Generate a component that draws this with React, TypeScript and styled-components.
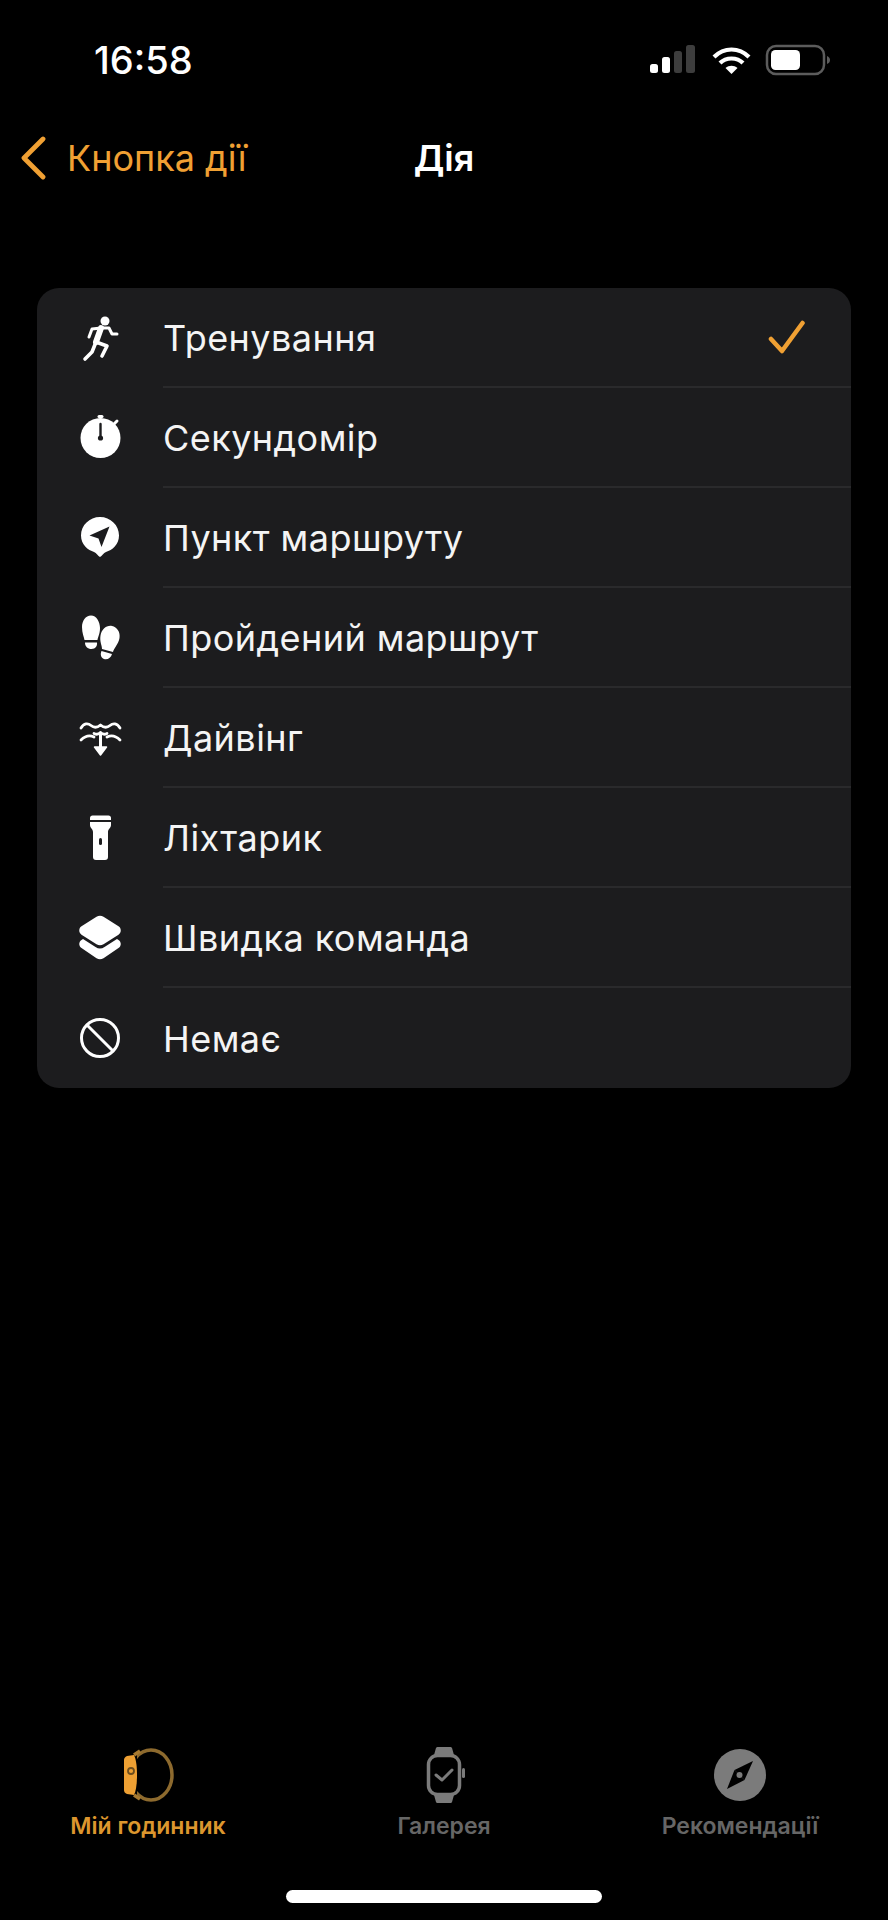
import React from "react";
import styled, { createGlobalStyle } from "styled-components";

const Global = createGlobalStyle`
  html, body { margin: 0; padding: 0; background: #000; }
  body { font-family: Inter, "Liberation Sans", sans-serif; -webkit-font-smoothing: antialiased; }
`;

const Screen = styled.div`
  width: 888px;
  height: 1920px;
  display: flex;
  flex-direction: column;
  background: #000;
  color: #fff;
  overflow: hidden;
`;

const StatusBar = styled.div`
  height: 120px;
  flex: none;
  display: flex;
  align-items: center;
  justify-content: space-between;
  padding: 0 58px 0 94px;
  box-sizing: border-box;
`;

const Time = styled.span`
  font-size: 38px;
  font-weight: 500;
`;

const StatusIcons = styled.div`
  display: flex;
  align-items: center;
`;

const NavBar = styled.div`
  height: 76px;
  flex: none;
  display: grid;
  grid-template-columns: 1fr auto 1fr;
  align-items: center;
  padding: 0 20px;
`;

const BackLink = styled.div`
  display: flex;
  align-items: center;
  gap: 21px;
  color: #f0a033;
  font-size: 36px;
`;

const NavTitle = styled.div`
  font-size: 36px;
  font-weight: 600;
`;

const Card = styled.ul`
  list-style: none;
  margin: 92px 37px 0;
  padding: 0;
  background: #1c1c1e;
  border-radius: 22px;
  flex: none;
`;

const Row = styled.li`
  height: 100px;
  display: flex;
  align-items: stretch;
`;

const IconCell = styled.div`
  width: 126px;
  flex: none;
  display: flex;
  align-items: center;
  justify-content: center;
`;

const RowBody = styled.div<{ $last?: boolean }>`
  flex: 1;
  display: flex;
  align-items: center;
  justify-content: space-between;
  padding: 2px 45px 0 0;
  font-size: 36px;
  letter-spacing: 0.45px;
  color: #f4f4f4;
  box-sizing: border-box;
  border-bottom: ${(p) => (p.$last ? "none" : "2px solid #2a2a2c")};
`;

const TabBar = styled.nav`
  margin-top: auto;
  display: grid;
  grid-template-columns: repeat(3, 1fr);
`;

const Tab = styled.div<{ $active?: boolean }>`
  display: flex;
  flex-direction: column;
  align-items: center;
  gap: 8px;
  color: ${(p) => (p.$active ? "#dc962e" : "#666666")};
  font-size: 23px;
  font-weight: 600;
  line-height: 28px;
`;

const HomeArea = styled.div`
  flex: none;
  display: flex;
  justify-content: center;
  padding: 50px 0 17px;
`;

const HomeIndicator = styled.div`
  width: 316px;
  height: 13px;
  border-radius: 7px;
  background: #fff;
`;

const W = "#ffffff";
const D = "#1c1c1e";
const O = "#f0a033";

const Ico: React.FC<{ children: React.ReactNode }> = ({ children }) => (
  <svg width="48" height="48" viewBox="0 0 48 48" fill="none">{children}</svg>
);

const RunIcon = () => (
  <Ico>
    <circle cx="29" cy="7" r="4.5" fill={W} />
    <path d="M25 14 L20 28" stroke={W} strokeWidth="6" strokeLinecap="round" />
    <g stroke={W} strokeWidth="3" strokeLinecap="round" strokeLinejoin="round">
      <path d="M25 14 L33 14 L36 20 L41 20" />
      <path d="M25 14 L16 15 L13 23" />
      <path d="M20 28 L16 38 L9 45" strokeWidth="3.6" />
      <path d="M20 28 L31 32 L26 42" strokeWidth="3.6" />
    </g>
  </Ico>
);

const StopwatchIcon = () => (
  <Ico>
    <circle cx="24.5" cy="24" r="20" fill={W} />
    <rect x="21.5" y="1" width="6" height="3" rx="1.5" fill={W} />
    <rect x="23.5" y="2" width="2" height="4" fill={W} />
    <path d="M38 10 L41 7" stroke={W} strokeWidth="3" strokeLinecap="round" />
    <path d="M24.5 10 V24" stroke={D} strokeWidth="2.4" strokeLinecap="round" />
    <circle cx="24.5" cy="24" r="2.6" fill={D} />
  </Ico>
);

const PinIcon = () => (
  <Ico>
    <path d="M24 3 C13.5 3 5 11.2 5 21.5 C5 31 12 36 18 38 C20.5 39 22 42 24 43 C26 42 27.5 39 30 38 C36 36 43 31 43 21.5 C43 11.2 34.5 3 24 3 Z" fill={W} />
    <path d="M33.5 12.5 L13.5 21.5 L22.5 24.5 L25.5 33 Z" fill={D} />
  </Ico>
);

const StepsIcon = () => (
  <Ico>
    <path d="M15 1.5 C20.5 1.5 24 8 24 14 C24 20 21.5 24 21.5 26 H8.5 C8 23 6 19 6 13 C6 7 9.5 1.5 15 1.5 Z" fill={W} />
    <path d="M9 28.5 H21 C21.5 32 19.5 35 15.5 35 C11.5 35 9 32.5 9 28.5 Z" fill={W} />
    <path d="M36 12 C41 13 44.5 18 43.5 24 C42.5 30 38 34 37 38 L26 35 C26 31 23.5 28 24.5 21.5 C25.5 15.5 30.5 11 36 12 Z" fill={W} />
    <path d="M25.5 37 L36 40 C35 44 31.5 46 28 45 C25 44 24 40.5 25.5 37 Z" fill={W} />
  </Ico>
);

const DiveIcon = () => (
  <Ico>
    <g stroke={W} strokeWidth="2.8" strokeLinecap="round" strokeLinejoin="round">
      <path d="M5 14 C8 9 12 9 15 11.5 C18 14 21 14 24.5 11 C28 14 31 14 34 11.5 C37 9 41 9 44 14" />
      <path d="M5 26 C9 22 14 21 18 23" />
      <path d="M31 23 C35 21 40 22 44 26" />
      <path d="M18 19.5 C21 21 23 20 24.5 18.5 C26 20 28 21 31 19.5" />
      <path d="M24.5 19 V36" strokeWidth="3" />
    </g>
    <path d="M18.5 33 H30.5 L24.5 41 Z" fill={W} stroke={W} strokeWidth="1.5" strokeLinejoin="round" />
  </Ico>
);

const FlashlightIcon = () => (
  <Ico>
    <path d="M14 4 C14 2.5 15 1.5 16.5 1.5 H32.5 C34 1.5 35 2.5 35 4 V6 H14 Z" fill={W} />
    <path d="M14 8 H35 V11 C35 14 32 15 32 18 V43 C32 45 31 46 29 46 H20 C18 46 17 45 17 43 V18 C17 15 14 14 14 11 Z" fill={W} />
    <rect x="23" y="24" width="3" height="7" rx="1.5" fill={D} />
  </Ico>
);

const LayersIcon = () => (
  <Ico>
    <path d="M20.5 2.8 C22.8 1.4 25.2 1.4 27.5 2.8 L42.5 12.3 C45.5 14.2 45.5 18.8 42.5 20.7 L27.5 30.2 C25.2 31.6 22.8 31.6 20.5 30.2 L5.5 20.7 C2.5 18.8 2.5 14.2 5.5 12.3 Z" fill={W} />
    <path d="M7 25 L19.5 33 C22.5 35 25.5 35 28.5 33 L41 25 L42.5 26 C45.5 28 45.5 32 42.5 34 L27.5 44.3 C25.2 45.7 22.8 45.7 20.5 44.3 L5.5 34 C2.5 32 2.5 28 5.5 26 Z" fill={W} />
  </Ico>
);

const BanIcon = () => (
  <Ico>
    <circle cx="24" cy="24" r="18.5" stroke={W} strokeWidth="3" />
    <path d="M11 11 L37 37" stroke={W} strokeWidth="3" />
  </Ico>
);

const rows: { label: string; icon: React.ReactNode }[] = [
  { label: "Тренування", icon: <RunIcon /> },
  { label: "Секундомір", icon: <StopwatchIcon /> },
  { label: "Пункт маршруту", icon: <PinIcon /> },
  { label: "Пройдений маршрут", icon: <StepsIcon /> },
  { label: "Дайвінг", icon: <DiveIcon /> },
  { label: "Ліхтарик", icon: <FlashlightIcon /> },
  { label: "Швидка команда", icon: <LayersIcon /> },
  { label: "Немає", icon: <BanIcon /> },
];

const StatusGlyphs = () => (
  <svg width="184" height="34" viewBox="0 0 184 34" fill="none">
    <rect x="4" y="21" width="8" height="9" rx="2.5" fill={W} />
    <rect x="16" y="14" width="8" height="16" rx="2.5" fill={W} />
    <rect x="28" y="8" width="8" height="22" rx="2.5" fill="#3d3d3d" />
    <rect x="40" y="2" width="9" height="28" rx="2.5" fill="#3d3d3d" />
    <g stroke={W} strokeWidth="4.2" fill="none">
      <path d="M68 14 C78 4 93 4 103 14" />
      <path d="M74 20 C80 14 91 14 97 20" />
    </g>
    <path d="M79.5 25 C83 22 88 22 91.5 25 L85.5 31 Z" fill={W} />
    <rect x="121" y="3" width="57" height="28" rx="9" stroke="#5c5c5c" strokeWidth="2.5" />
    <rect x="125" y="7" width="29" height="20" rx="4.5" fill={W} />
    <path d="M181 13 C183 14 184 15 184 17 C184 19 183 20 181 21 Z" fill="#5c5c5c" />
  </svg>
);

const Chevron = () => (
  <svg width="26" height="44" viewBox="0 0 26 44" fill="none">
    <path d="M23 3 L4 22 L23 41" stroke={O} strokeWidth="4.8" strokeLinecap="round" strokeLinejoin="round" />
  </svg>
);

const Check = () => (
  <svg width="38" height="38" viewBox="0 0 38 38" fill="none">
    <path d="M3 20 L14 32 L34.5 4" stroke={O} strokeWidth="4.5" strokeLinecap="round" strokeLinejoin="round" />
  </svg>
);

const WatchSideIcon = () => (
  <svg width="56" height="58" viewBox="0 0 56 58" fill="none">
    <ellipse cx="31" cy="29" rx="21" ry="25" stroke="#8d6a2e" strokeWidth="3.5" />
    <rect x="8" y="6" width="9" height="46" fill="#000" />
    <path d="M4 14 C4 12 5 11 7 10 L14 9 C16 13 17 20 17 29 C17 38 16 45 14 49 L7 48 C5 47 4 46 4 44 Z" fill="#eea033" />
    <path d="M14 9 L20 5 M14 49 L20 53" stroke="#a87a30" strokeWidth="3.5" />
    <circle cx="11" cy="25" r="3" stroke="#6e4e1e" strokeWidth="1.8" />
  </svg>
);

const WatchFrontIcon = () => (
  <svg width="56" height="58" viewBox="0 0 56 58" fill="none">
    <path d="M18 9 L20 2 C20.5 1 21 1 22 1 H34 C35 1 35.5 1 36 2 L38 9 Z" fill="#7b7b7b" />
    <path d="M18 49 L20 56 C20.5 57 21 57 22 57 H34 C35 57 35.5 57 36 56 L38 49 Z" fill="#7b7b7b" />
    <rect x="12.5" y="9.5" width="31" height="39" rx="9" stroke="#7b7b7b" strokeWidth="3.5" />
    <rect x="46" y="22" width="3" height="10" rx="1.5" fill="#7b7b7b" />
    <path d="M20 29 L26 34 L36 24" stroke="#7b7b7b" strokeWidth="3" strokeLinecap="round" strokeLinejoin="round" />
  </svg>
);

const CompassIcon = () => (
  <svg width="56" height="58" viewBox="0 0 56 58" fill="none">
    <circle cx="28" cy="29" r="26" fill="#7b7b7b" />
    <path d="M41 15 L32.5 34 L22.5 24 Z" fill="#000" />
    <path d="M15 43 L22.5 24 L32.5 34 Z" fill="#000" />
    <circle cx="27.5" cy="29" r="3" fill="#7b7b7b" />
  </svg>
);

export default function App() {
  return (
    <Screen>
      <Global />
      <StatusBar>
        <Time>16:58</Time>
        <StatusIcons>
          <StatusGlyphs />
        </StatusIcons>
      </StatusBar>
      <NavBar>
        <BackLink>
          <Chevron />
          <span>Кнопка дії</span>
        </BackLink>
        <NavTitle>Дія</NavTitle>
        <span />
      </NavBar>
      <Card>
        {rows.map((r, i) => (
          <Row key={r.label}>
            <IconCell>{r.icon}</IconCell>
            <RowBody $last={i === rows.length - 1}>
              <span>{r.label}</span>
              {i === 0 && <Check />}
            </RowBody>
          </Row>
        ))}
      </Card>
      <TabBar>
        <Tab $active>
          <WatchSideIcon />
          <span>Мій годинник</span>
        </Tab>
        <Tab>
          <WatchFrontIcon />
          <span>Галерея</span>
        </Tab>
        <Tab>
          <CompassIcon />
          <span>Рекомендації</span>
        </Tab>
      </TabBar>
      <HomeArea>
        <HomeIndicator />
      </HomeArea>
    </Screen>
  );
}
